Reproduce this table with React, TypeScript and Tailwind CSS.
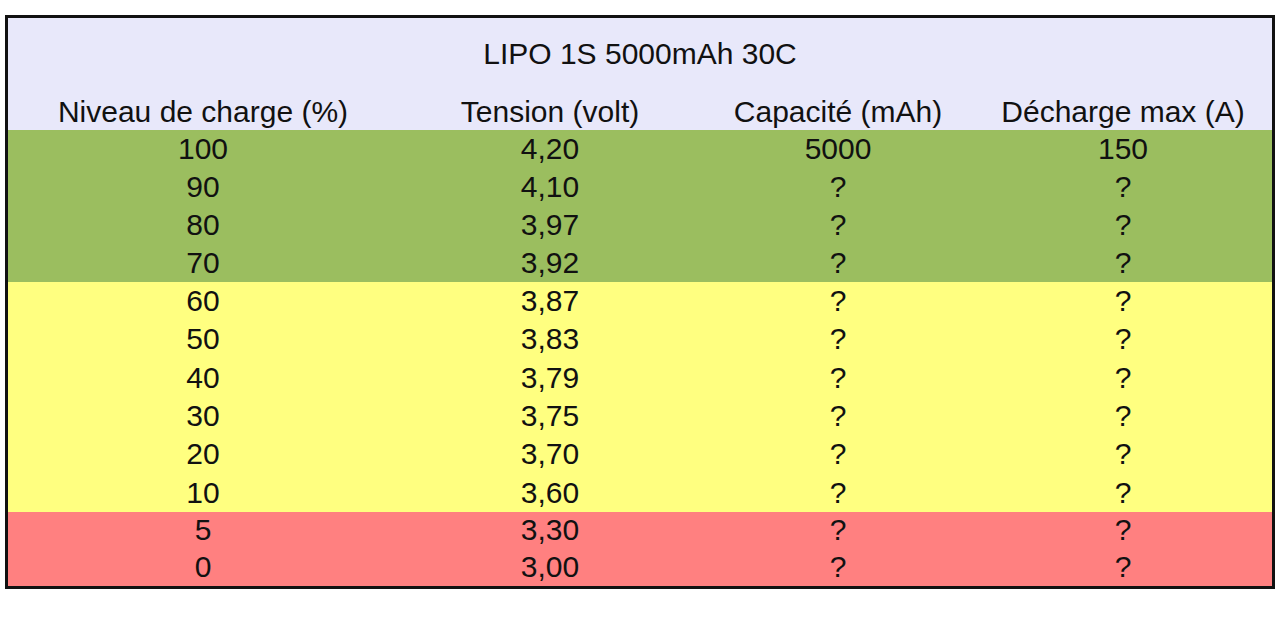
import React from 'react';

type Row = { level: string; volt: string; cap: string; max: string; zone: 'green' | 'yellow' | 'red' };

const rows: Row[] = [
  { level: '100', volt: '4,20', cap: '5000', max: '150', zone: 'green' },
  { level: '90', volt: '4,10', cap: '?', max: '?', zone: 'green' },
  { level: '80', volt: '3,97', cap: '?', max: '?', zone: 'green' },
  { level: '70', volt: '3,92', cap: '?', max: '?', zone: 'green' },
  { level: '60', volt: '3,87', cap: '?', max: '?', zone: 'yellow' },
  { level: '50', volt: '3,83', cap: '?', max: '?', zone: 'yellow' },
  { level: '40', volt: '3,79', cap: '?', max: '?', zone: 'yellow' },
  { level: '30', volt: '3,75', cap: '?', max: '?', zone: 'yellow' },
  { level: '20', volt: '3,70', cap: '?', max: '?', zone: 'yellow' },
  { level: '10', volt: '3,60', cap: '?', max: '?', zone: 'yellow' },
  { level: '5', volt: '3,30', cap: '?', max: '?', zone: 'red' },
  { level: '0', volt: '3,00', cap: '?', max: '?', zone: 'red' },
];

const zoneStyle = {
  green: 'bg-[#9bbe5f] h-[38px]',
  yellow: 'bg-[#ffff80] h-[38.33px]',
  red: 'bg-[#ff8080] h-[37px]',
};

const cols = 'grid grid-cols-[390px_304px_272px_298px]';

export default function App() {
  return (
    <div className="w-[1280px] h-[617px] bg-white pt-[15px] pl-[5px] font-['Liberation_Sans',Arial,sans-serif] text-[30px] text-[#111] leading-none">
      <div className="w-[1270px] border-[3px] border-[#111]">
        <div className="bg-[#e8e8fa]">
          <div className="h-[72px] flex items-center justify-center">LIPO 1S 5000mAh 30C</div>
          <div className={`${cols} h-[40px] items-center pt-1`}>
            <div className="text-center">Niveau de charge (%)</div>
            <div className="text-center">Tension (volt)</div>
            <div className="text-center">Capacité (mAh)</div>
            <div className="text-center">Décharge max (A)</div>
          </div>
        </div>
        {rows.map((r) => (
          <div key={r.level} className={`${cols} items-center ${zoneStyle[r.zone]}`}>
            <div className="text-center">{r.level}</div>
            <div className="text-center">{r.volt}</div>
            <div className="text-center">{r.cap}</div>
            <div className="text-center">{r.max}</div>
          </div>
        ))}
      </div>
    </div>
  );
}
